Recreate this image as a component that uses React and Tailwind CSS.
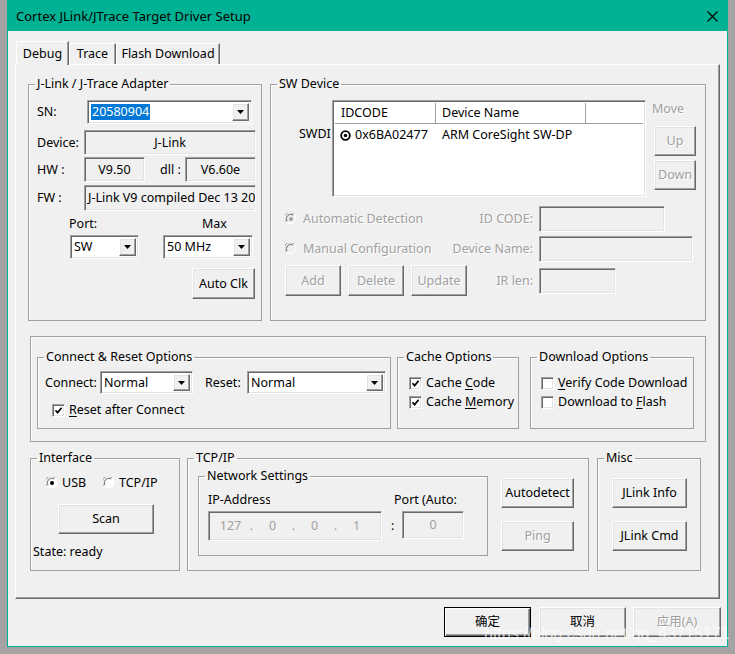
import React from "react";

const RAISED =
  "bg-[#f0f0f0] border border-t-white border-l-white border-r-[#696969] border-b-[#696969] shadow-[inset_-1px_-1px_0_#a0a0a0,inset_1px_1px_0_#e3e3e3]";
const SUNKEN =
  "border border-t-[#a0a0a0] border-l-[#a0a0a0] border-r-white border-b-white shadow-[inset_1px_1px_0_#696969,inset_-1px_-1px_0_#e3e3e3]";
const DIS = "text-[#a0a0a0] [text-shadow:1px_1px_0_#ffffff]";

function Btn({ className = "", disabled, children }) {
  return (
    <div
      className={`${RAISED} flex items-center justify-center whitespace-nowrap ${
        disabled ? DIS : "text-black"
      } ${className}`}
    >
      {children}
    </div>
  );
}

function Field({ className = "", children }) {
  return (
    <div className={`${SUNKEN} bg-[#f0f0f0] flex items-center overflow-hidden whitespace-nowrap ${className}`}>
      {children}
    </div>
  );
}

function Arrow() {
  return (
    <svg width="7" height="4" viewBox="0 0 7 4">
      <polygon points="0,0 7,0 3.5,4" fill="#000" />
    </svg>
  );
}

function Combo({ className = "", children }) {
  return (
    <div className={`${SUNKEN} bg-white flex items-stretch p-[2px] ${className}`}>
      <div className="flex-1 flex items-center pl-[1px] overflow-hidden whitespace-nowrap">{children}</div>
      <div className={`${RAISED} w-[17px] flex items-center justify-center`}>
        <Arrow />
      </div>
    </div>
  );
}

function Group({ title, className = "", children }) {
  return (
    <fieldset className={`min-w-0 border border-[#a0a0a0] shadow-[inset_1px_1px_0_#ffffff] ${className}`}>
      <legend className="ml-[6px] px-[2px] leading-[16px] whitespace-nowrap">{title}</legend>
      {children}
    </fieldset>
  );
}

function Check({ checked }) {
  return (
    <div className={`${SUNKEN} bg-white w-[13px] h-[13px] shrink-0 flex items-center justify-center`}>
      {checked && (
        <svg width="9" height="9" viewBox="0 0 9 9">
          <path d="M1.5 4.2 L3.6 6.6 L7.6 1.8" stroke="#000" strokeWidth="1.7" fill="none" />
        </svg>
      )}
    </div>
  );
}

function Radio({ checked, disabled }) {
  return (
    <svg width="12" height="12" viewBox="0 0 12 12" className="shrink-0">
      <circle cx="6" cy="6" r="5.5" fill={disabled ? "#f0f0f0" : "#ffffff"} />
      <path d="M1 9 A5.5 5.5 0 0 1 9 1" stroke="#a0a0a0" strokeWidth="1" fill="none" />
      <path d="M9 1 A5.5 5.5 0 0 1 1 9" stroke="#ffffff" strokeWidth="1" fill="none" />
      <path d="M2 8.2 A4.5 4.5 0 0 1 8.2 2" stroke="#696969" strokeWidth="1" fill="none" />
      {checked && <circle cx="6" cy="6" r="2" fill={disabled ? "#a0a0a0" : "#000000"} />}
    </svg>
  );
}

function ListRadio() {
  return (
    <svg width="11" height="11" viewBox="0 0 11 11" className="shrink-0">
      <circle cx="5.5" cy="5.5" r="4.3" stroke="#000" strokeWidth="1.8" fill="#fff" />
      <circle cx="5.5" cy="5.5" r="1.7" fill="#000" />
    </svg>
  );
}

function Tab({ selected, className = "", children }) {
  return (
    <div
      className={`${
        selected
          ? "relative z-10 h-[24px] -mb-[1px] bg-[#f0f0f0]"
          : "h-[21px]"
      } border-t border-l border-r border-t-white border-l-white border-r-[#696969] shadow-[inset_-1px_0_0_#a0a0a0] flex items-center justify-center whitespace-nowrap ${className}`}
    >
      {children}
    </div>
  );
}

export default function App() {
  return (
    <div className="w-[735px] h-[654px] bg-[#a3a3a3] pl-[7px] overflow-hidden font-['Noto_Sans','Noto_Sans_CJK_SC',sans-serif] text-[12.5px] leading-[16px] text-black">
      <div className="relative w-[721px] h-[647px] bg-[#f0f0f0] border border-[#00b294] flex flex-col">
        {/* Title bar */}
        <div className="h-[30px] shrink-0 bg-[#00b294] flex items-center justify-between pl-[8px] pr-[9px]">
          <span className="text-[13px] text-black">Cortex JLink/JTrace Target Driver Setup</span>
          <svg width="11" height="11" viewBox="0 0 11 11">
            <path d="M0.5 0.5 L10.5 10.5 M10.5 0.5 L0.5 10.5" stroke="#000" strokeWidth="1.1" />
          </svg>
        </div>

        {/* Tabs */}
        <div className="mt-[10px] ml-[8px] h-[23px] flex items-end">
          <Tab selected className="w-[53px]">Debug</Tab>
          <Tab className="w-[47px]">Trace</Tab>
          <Tab className="w-[104px]">Flash Download</Tab>
        </div>

        {/* Panel */}
        <div className="ml-[7px] w-[705px] h-[535px] border border-t-white border-l-white border-r-[#696969] border-b-[#696969] shadow-[inset_-1px_-1px_0_#a0a0a0] flex flex-col">
          {/* Row 1 */}
          <div className="flex items-start pt-[11px] pl-[12px]">
            {/* J-Link group */}
            <Group title="J-Link / J-Trace Adapter" className="w-[234px] h-[245px]">
              <div className="flex flex-col pl-[8px]">
                <div className="flex items-center mt-[8px] h-[24px]">
                  <span className="w-[50px]">SN:</span>
                  <Combo className="w-[165px] h-[24px]">
                    <span className="bg-[#0078d7] text-white px-[1px]">20580904</span>
                  </Combo>
                </div>
                <div className="flex items-center mt-[6px] h-[25px]">
                  <span className="w-[47px]">Device:</span>
                  <Field className="w-[172px] h-[25px] justify-center">J-Link</Field>
                </div>
                <div className="flex items-center mt-[2px] h-[25px]">
                  <span className="w-[47px]">HW :</span>
                  <Field className="w-[61px] h-[25px] justify-center">V9.50</Field>
                  <span className="ml-[15px] w-[25px]">dll :</span>
                  <Field className="w-[71px] h-[25px] justify-center">V6.60e</Field>
                </div>
                <div className="flex items-center mt-[3px] h-[26px]">
                  <span className="w-[47px]">FW :</span>
                  <Field className="w-[172px] h-[26px] pl-[3px]">J-Link V9 compiled Dec 13 2018 11:14:50</Field>
                </div>
                <div className="flex items-center mt-[5px] h-[16px]">
                  <span className="w-[165px] pl-[32px]">Port:</span>
                  <span>Max</span>
                </div>
                <div className="flex items-center mt-[3px] h-[24px]">
                  <Combo className="ml-[33px] w-[69px] h-[24px]">SW</Combo>
                  <Combo className="ml-[24px] w-[90px] h-[24px]">50 MHz</Combo>
                </div>
                <Btn className="mt-[9px] ml-[155px] w-[63px] h-[31px]">Auto Clk</Btn>
              </div>
            </Group>

            {/* SW Device group */}
            <Group title="SW Device" className="ml-[8px] w-[436px] h-[245px]">
              <div className="flex flex-col">
                <div className="flex items-start mt-[8px]">
                  <div className="w-[61px] pl-[28px] pt-[26px] overflow-hidden whitespace-nowrap">SWDI</div>
                  <div className={`${SUNKEN} bg-white w-[314px] h-[97px] p-[2px] flex flex-col`}>
                    <div className="flex h-[21px] shrink-0 border-b border-b-[#a0a0a0]">
                      <div className="w-[101px] pl-[6px] flex items-center border-r border-r-[#a0a0a0]">IDCODE</div>
                      <div className="w-[150px] pl-[6px] flex items-center border-r border-r-[#a0a0a0]">Device Name</div>
                      <div className="flex-1" />
                    </div>
                    <div className="flex items-center h-[20px] mt-[1px]">
                      <div className="w-[101px] pl-[5px] flex items-center gap-[4px]">
                        <ListRadio />
                        <span>0x6BA02477</span>
                      </div>
                      <span className="pl-[6px]">ARM CoreSight SW-DP</span>
                    </div>
                  </div>
                  <div className="ml-[8px] w-[42px] flex flex-col">
                    <span className={`mt-[1px] -ml-[2px] ${DIS}`}>Move</span>
                    <Btn disabled className="mt-[9px] w-[42px] h-[30px]">Up</Btn>
                    <Btn disabled className="mt-[4px] w-[42px] h-[30px]">Down</Btn>
                  </div>
                </div>

                <div className="flex items-center mt-[9px] h-[26px]">
                  <div className="w-[196px] pl-[14px] flex items-center gap-[6px] whitespace-nowrap">
                    <Radio checked disabled />
                    <span className={DIS}>Automatic Detection</span>
                  </div>
                  <div className={`w-[66px] flex justify-end whitespace-nowrap ${DIS}`}>ID CODE:</div>
                  <Field className="ml-[6px] w-[126px] h-[26px]" />
                </div>
                <div className="flex items-center mt-[4px] h-[26px]">
                  <div className="w-[196px] pl-[14px] flex items-center gap-[6px] whitespace-nowrap">
                    <Radio disabled />
                    <span className={DIS}>Manual Configuration</span>
                  </div>
                  <div className={`w-[66px] flex justify-end whitespace-nowrap ${DIS}`}>Device Name:</div>
                  <Field className="ml-[6px] w-[154px] h-[26px]" />
                </div>
                <div className="flex items-center mt-[3px] h-[31px]">
                  <div className="w-[196px] pl-[14px] flex items-center">
                    <Btn disabled className="w-[56px] h-[31px]">Add</Btn>
                    <Btn disabled className="ml-[7px] w-[56px] h-[31px]">Delete</Btn>
                    <Btn disabled className="ml-[7px] w-[56px] h-[31px]">Update</Btn>
                  </div>
                  <div className={`w-[66px] flex justify-end whitespace-nowrap ${DIS}`}>IR len:</div>
                  <Field className="ml-[6px] w-[77px] h-[26px]" />
                </div>
              </div>
            </Group>
          </div>

          {/* Row 2 */}
          <div className="mt-[15px] ml-[14px] w-[676px] h-[106px] border border-[#a0a0a0] shadow-[inset_1px_1px_0_#ffffff] pt-[12px] pl-[6px] flex items-start">
            <Group title="Connect & Reset Options" className="w-[354px] h-[80px]">
              <div className="flex flex-col">
                <div className="flex items-center mt-[6px] h-[23px] pl-[7px]">
                  <span className="w-[55px]">Connect:</span>
                  <Combo className="w-[93px] h-[23px]">Normal</Combo>
                  <span className="ml-[12px] w-[42px]">Reset:</span>
                  <Combo className="w-[139px] h-[23px]">Normal</Combo>
                </div>
                <div className="flex items-center mt-[8px] h-[16px] pl-[14px] gap-[4px]">
                  <Check checked />
                  <span>
                    <span className="underline underline-offset-2">R</span>eset after Connect
                  </span>
                </div>
              </div>
            </Group>

            <Group title="Cache Options" className="ml-[6px] w-[122px] h-[80px]">
              <div className="flex flex-col pl-[11px]">
                <div className="flex items-center mt-[10px] h-[16px] gap-[4px]">
                  <Check checked />
                  <span>
                    Cache <span className="underline underline-offset-2">C</span>ode
                  </span>
                </div>
                <div className="flex items-center mt-[3px] h-[16px] gap-[4px] whitespace-nowrap">
                  <Check checked />
                  <span>
                    Cache <span className="underline underline-offset-2">M</span>emory
                  </span>
                </div>
              </div>
            </Group>

            <Group title="Download Options" className="ml-[11px] w-[164px] h-[80px]">
              <div className="flex flex-col pl-[10px]">
                <div className="flex items-center mt-[10px] h-[16px] gap-[4px] w-[148px] overflow-hidden whitespace-nowrap">
                  <Check />
                  <span>
                    <span className="underline underline-offset-2">V</span>erify Code Download
                  </span>
                </div>
                <div className="flex items-center mt-[3px] h-[16px] gap-[4px] whitespace-nowrap">
                  <Check />
                  <span>
                    Download to <span className="underline underline-offset-2">F</span>lash
                  </span>
                </div>
              </div>
            </Group>
          </div>

          {/* Row 3 */}
          <div className="mt-[8px] ml-[14px] flex items-start">
            <Group title="Interface" className="w-[150px] h-[121px]">
              <div className="flex flex-col">
                <div className="flex items-center mt-[9px] h-[16px] pl-[15px]">
                  <Radio checked />
                  <span className="ml-[4px] w-[41px]">USB</span>
                  <Radio />
                  <span className="ml-[4px]">TCP/IP</span>
                </div>
                <Btn className="mt-[13px] ml-[27px] w-[96px] h-[30px]">Scan</Btn>
                <div className="mt-[10px] pl-[2px] h-[16px]">State: ready</div>
              </div>
            </Group>

            <Group title="TCP/IP" className="ml-[7px] w-[402px] h-[121px]">
              <div className="flex items-start">
                <Group title="Network Settings" className="ml-[10px] mt-[2px] w-[290px] h-[88px]">
                  <div className="flex flex-col">
                    <div className="flex items-center mt-[8px] h-[16px] pl-[9px]">
                      <span className="w-[62px] overflow-hidden whitespace-nowrap">IP-Address</span>
                      <span className="ml-[124px] whitespace-nowrap">Port (Auto:</span>
                    </div>
                    <div className="flex items-start mt-[3px] pl-[9px]">
                      <Field className="w-[174px] h-[30px] pl-[4px] text-[#a0a0a0]">
                        <span className="w-[35px] text-center">127</span>
                        <span className="w-[7px] text-center">.</span>
                        <span className="w-[35px] text-center">0</span>
                        <span className="w-[7px] text-center">.</span>
                        <span className="w-[35px] text-center">0</span>
                        <span className="w-[7px] text-center">.</span>
                        <span className="w-[35px] text-center">1</span>
                      </Field>
                      <span className="ml-[9px] mt-[7px] w-[11px]">:</span>
                      <Field className="w-[62px] h-[28px] justify-center text-[#a0a0a0]">0</Field>
                    </div>
                  </div>
                </Group>
                <div className="ml-[13px] flex flex-col">
                  <Btn className="mt-[12px] w-[73px] h-[30px]">Autodetect</Btn>
                  <Btn disabled className="mt-[13px] w-[73px] h-[30px]">Ping</Btn>
                </div>
              </div>
            </Group>

            <Group title="Misc" className="ml-[8px] w-[104px] h-[121px]">
              <div className="flex flex-col pl-[14px]">
                <Btn className="mt-[12px] w-[75px] h-[30px]">JLink Info</Btn>
                <Btn className="mt-[13px] w-[75px] h-[30px]">JLink Cmd</Btn>
              </div>
            </Group>
          </div>
        </div>

        {/* Bottom buttons */}
        <div className="mt-[8px] flex justify-end pr-[6px]">
          <div className="w-[87px] h-[30px] bg-[#f0f0f0] border border-black shadow-[inset_1px_1px_0_#ffffff,inset_-1px_-1px_0_#696969,inset_-2px_-2px_0_#a0a0a0] flex items-center justify-center">
            确定
          </div>
          <Btn className="ml-[8px] w-[87px] h-[30px]">取消</Btn>
          <Btn disabled className="ml-[7px] w-[88px] h-[30px]">应用(A)</Btn>
        </div>

        {/* Watermark overlay */}
        <div className="absolute left-[476px] top-[623px] font-['Liberation_Sans',sans-serif] text-[16px] leading-[20px] text-white/70 whitespace-nowrap pointer-events-none">
          https://blog.csdn.net/qq_43715171
        </div>
      </div>
    </div>
  );
}
